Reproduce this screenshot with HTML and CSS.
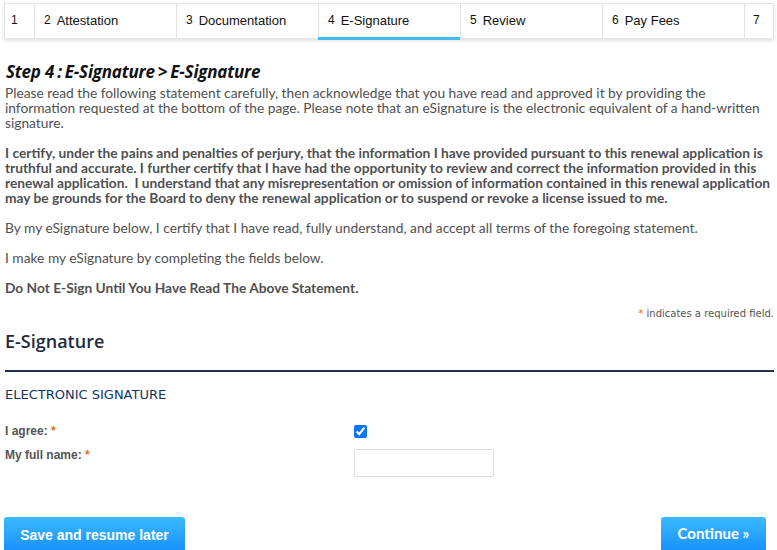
FILE: index.html
```html
<!DOCTYPE html>
<html>
<head>
<meta charset="utf-8">
<link rel="stylesheet" href="styles.css">
</head>
<body>
<div class="page">
  <nav class="steps">
    <div class="step narrow"><span class="num">1</span></div>
    <div class="step"><span class="num">2</span><span class="lbl">Attestation</span></div>
    <div class="step"><span class="num">3</span><span class="lbl">Documentation</span></div>
    <div class="step active"><span class="num">4</span><span class="lbl">E-Signature</span></div>
    <div class="step"><span class="num">5</span><span class="lbl">Review</span></div>
    <div class="step"><span class="num">6</span><span class="lbl">Pay Fees</span></div>
    <div class="step narrow"><span class="num">7</span></div>
  </nav>

  <h1 class="title">Step 4<span class="sep">:</span>E-Signature<span class="sep">&gt;</span>E-Signature</h1>

  <div class="statement">
    <p>Please read the following statement carefully, then acknowledge that you have read and approved it by providing the information requested at the bottom of the page. Please note that an eSignature is the electronic equivalent of a hand-written signature.</p>
    <p class="bold">I certify, under the pains and penalties of perjury, that the information I have provided pursuant to this renewal application is truthful and accurate. I further certify that I have had the opportunity to review and correct the information provided in this renewal application.&nbsp; I understand that any misrepresentation or omission of information contained in this renewal application may be grounds for the Board to deny the renewal application or to suspend or revoke a license issued to me.</p>
    <p>By my eSignature below, I certify that I have read, fully understand, and accept all terms of the foregoing statement.</p>
    <p>I make my eSignature by completing the fields below.</p>
    <p class="bold">Do Not E-Sign Until You Have Read The Above Statement.</p>
  </div>

  <div class="required-note"><span class="star">*</span> indicates a required field.</div>

  <h2 class="section-title">E-Signature</h2>
  <h3 class="sub-title">ELECTRONIC SIGNATURE</h3>

  <div class="form">
    <label class="flabel" for="agree">I agree: <span class="star">*</span></label>
    <div class="fctrl"><input id="agree" type="checkbox" checked></div>
    <label class="flabel" for="fullname">My full name: <span class="star">*</span></label>
    <div class="fctrl"><input id="fullname" class="text" type="text"></div>
  </div>

  <div class="actions">
    <button class="btn save">Save and resume later</button>
    <button class="btn continue">Continue &raquo;</button>
  </div>
</div>
</body>
</html>
```

FILE: styles.css
```css
html, body {
  margin: 0;
  padding: 0;
  background: #fff;
}
body {
  font-family: "Lato", "Liberation Sans", sans-serif;
  color: #555;
  overflow: hidden;
}
.page {
  padding: 3px 3px 0 4px;
}
.steps {
  display: flex;
  height: 34px;
  border: 1px solid #e3e3e3;
  border-bottom: none;
  box-shadow: 0 3px 4px rgba(0,0,0,0.12);
  background: #fff;
  font-family: "Liberation Sans", Arial, sans-serif;
  color: #111;
}
.step {
  width: 142px;
  flex: none;
  display: flex;
  align-items: center;
  padding: 0 0 2px 9px;
  box-sizing: border-box;
  border-left: 1px solid #e3e3e3;
  font-size: 13px;
  position: relative;
}
.step:first-child { border-left: none; }
.step.narrow { width: 29px; padding-left: 6px; }
.step.narrow:last-child { flex: 1; padding-left: 8px; }
.step .num { font-size: 12px; margin-right: 6px; }
.step.active::after {
  content: "";
  position: absolute;
  left: -1px;
  right: 0;
  bottom: -2px;
  height: 3px;
  background: #3fbcf3;
}
.title {
  margin: 24px 0 0 2px;
  font-family: "Open Sans", sans-serif;
  font-style: italic;
  font-weight: 700;
  font-size: 17px;
  line-height: 20px;
  color: #111;
  letter-spacing: -0.2px;
}
.title .sep {
  margin: 0 3px;
}
.statement {
  margin-top: 3px;
  padding-left: 1px;
  font-size: 13.75px;
  line-height: 15px;
  color: #505050;
}
.statement p { margin: 0 0 15px 0; }
.statement p.bold { font-weight: 700; }
.statement p:last-child { margin-bottom: 0; }
.required-note {
  margin-top: 13px;
  text-align: right;
  font-family: "DejaVu Sans", Tahoma, sans-serif;
  font-size: 10px;
  color: #555;
}
.star { color: #e0701f; }
.section-title {
  margin: 10px 0 0 1px;
  padding-bottom: 17px;
  border-bottom: 2px solid #25304a;
  font-family: "Open Sans", sans-serif;
  font-weight: 600;
  font-size: 18px;
  line-height: 24px;
  color: #232b3a;
}
.sub-title {
  margin: 14px 0 0 1px;
  font-family: "DejaVu Sans", Tahoma, sans-serif;
  font-weight: 400;
  font-size: 13px;
  line-height: 18px;
  color: #0f3461;
}
.form {
  margin-top: 21px;
  display: grid;
  grid-template-columns: 350px 1fr;
  row-gap: 10px;
  align-items: start;
}
.flabel {
  padding-left: 1px;
  font-family: "Liberation Sans", Arial, sans-serif;
  font-weight: 700;
  font-size: 12px;
  line-height: 16px;
  color: #555;
  margin-top: -2px;
}
.fctrl input[type=checkbox] {
  display: block;
  margin: 0;
  width: 13px;
  height: 13px;
  accent-color: #0a75f5;
}
.fctrl .text {
  display: block;
  margin: 0;
  width: 140px;
  height: 28px;
  box-sizing: border-box;
  border: 1px solid #ddd;
  border-radius: 2px;
}
.actions {
  margin-top: 40px;
  display: flex;
  justify-content: space-between;
  padding-right: 8px;
}
.btn {
  height: 36px;
  border: none;
  border-radius: 3px;
  background: linear-gradient(#3bb9ff, #168ffc);
  color: #fff;
  font-weight: 700;
  cursor: pointer;
}
.btn.save {
  width: 181px;
  font-family: "Liberation Sans", Arial, sans-serif;
  font-size: 14px;
  padding: 0 0 1px 0;
}
.btn.continue {
  width: 105px;
  font-family: "Lato", sans-serif;
  font-size: 15px;
  padding: 0 0 5px 0;
}
```
